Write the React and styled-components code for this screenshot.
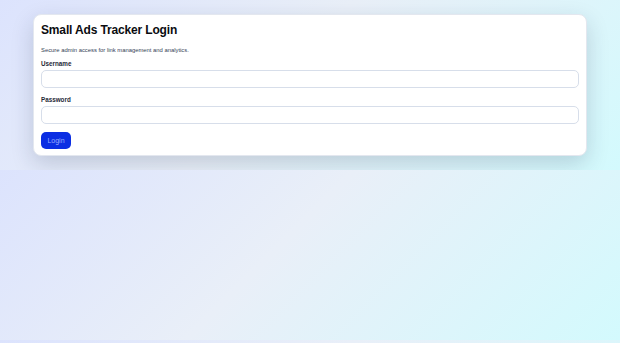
import styled, { createGlobalStyle } from 'styled-components';

const GlobalStyle = createGlobalStyle`
  body {
    margin: 0;
    padding: 14px 33px;
    background: linear-gradient(135deg, #dce3fd 0%, #e9eff8 45%, #d3fafd 100%);
    font-family: "Liberation Sans", Arial, sans-serif;
  }
`;

const Card = styled.div`
  background: #fff;
  border: 1px solid #e3e7ef;
  border-radius: 8px;
  box-shadow: 0 8px 22px rgba(20, 40, 70, 0.18);
  padding: 6px 7px 6px;
  display: flex;
  flex-direction: column;
`;

const Title = styled.h1`
  margin: 0;
  font-size: 12px;
  font-weight: 700;
  color: #0b0c10;
  letter-spacing: -0.15px;
  line-height: 18px;
`;

const Subtitle = styled.p`
  margin: 7px 0 6px;
  font-size: 5.85px;
  color: #334155;
  line-height: 8px;
`;

const Field = styled.label`
  display: flex;
  flex-direction: column;
  gap: 3px;
  margin-bottom: 8px;
`;

const LabelText = styled.span`
  font-size: 6.3px;
  font-weight: 700;
  color: #1f2937;
  line-height: 7px;
`;

const Input = styled.input`
  height: 18px;
  box-sizing: border-box;
  border: 1px solid #d7deea;
  border-radius: 5px;
  background: #fff;
  outline: none;
`;

const Button = styled.button`
  align-self: flex-start;
  width: 30px;
  height: 17px;
  padding: 0;
  border: none;
  border-radius: 5px;
  background: #0b2ee3;
  color: #9aabff;
  font-family: "Liberation Sans", Arial, sans-serif;
  font-size: 7px;
`;

export default function App() {
  return (
    <>
      <GlobalStyle />
      <Card>
        <Title>Small Ads Tracker Login</Title>
        <Subtitle>Secure admin access for link management and analytics.</Subtitle>
        <Field>
          <LabelText>Username</LabelText>
          <Input type="text" />
        </Field>
        <Field>
          <LabelText>Password</LabelText>
          <Input type="password" />
        </Field>
        <Button>Login</Button>
      </Card>
    </>
  );
}
